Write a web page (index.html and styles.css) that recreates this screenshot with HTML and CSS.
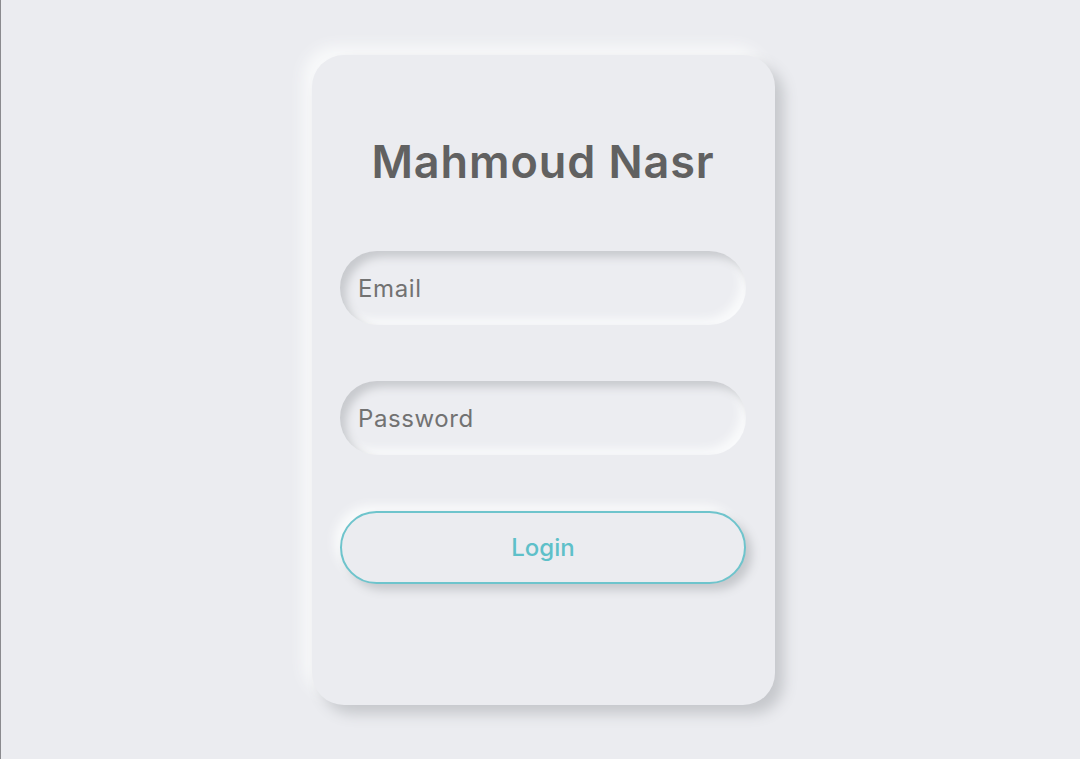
FILE: index.html
```html
<!DOCTYPE html>
<html>
<head>
<meta charset="utf-8">
<link rel="stylesheet" href="styles.css">
</head>
<body>
<div class="page">
  <form class="card">
    <h1 class="title">Mahmoud Nasr</h1>
    <div class="field"><input class="input" type="text" placeholder="Email"></div>
    <div class="field"><input class="input" type="password" placeholder="Password"></div>
    <button class="btn" type="button">Login</button>
  </form>
</div>
</body>
</html>
```

FILE: styles.css
```css
html, body {
  margin: 0;
  padding: 0;
  height: 100%;
}
body {
  background: #ebecf0;
  font-family: "Inter", "Noto Sans", sans-serif;
}
.page {
  box-sizing: border-box;
  height: 759px;
  border-left: 1px solid #8a8a8e;
  display: flex;
  justify-content: center;
  align-items: flex-start;
  padding-top: 55px;
  padding-left: 5px;
}
.card {
  box-sizing: border-box;
  width: 463px;
  height: 650px;
  border-radius: 32px;
  background: #ebecf0;
  box-shadow: 9px 9px 14px #c6c8cc, -9px -9px 14px #f8f9fa;
  display: flex;
  flex-direction: column;
  align-items: center;
  padding-top: 80px;
}
.title {
  margin: 0 0 62px 0;
  font-size: 45px;
  font-weight: 600;
  color: #616161;
  letter-spacing: 0.9px;
  line-height: 54px;
}
.field {
  width: 406px;
  height: 74px;
  border-radius: 37px;
  background: #ecedf1;
  box-shadow: inset 6px 6px 8px #c8cace, inset -6px -6px 8px #f9fafb;
  margin-bottom: 56px;
  display: flex;
  align-items: center;
}
.input {
  border: none;
  outline: none;
  background: transparent;
  width: 100%;
  padding: 0 18px;
  font-family: "Inter", "Noto Sans", sans-serif;
  font-size: 24px;
  letter-spacing: 0.6px;
  color: #6e6e6e;
}
.input::placeholder {
  color: #727272;
}
.btn {
  box-sizing: border-box;
  width: 406px;
  height: 73px;
  border-radius: 37px;
  border: 2px solid #6ec4cc;
  background: #ebecf0;
  box-shadow: 6px 6px 10px #c6c8cc, -6px -6px 10px #f9fafb;
  font-family: "Inter", "Noto Sans", sans-serif;
  font-size: 24px;
  font-weight: 500;
  color: #5ec0c9;
}
```
